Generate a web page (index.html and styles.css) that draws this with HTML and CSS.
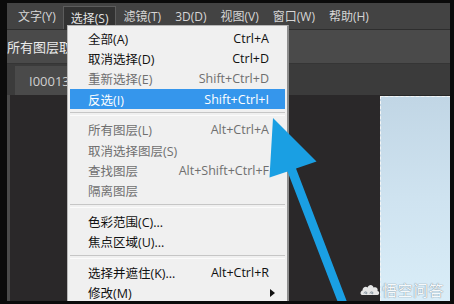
FILE: index.html
```html
<!DOCTYPE html>
<html>
<head>
<meta charset="utf-8">
<link rel="stylesheet" href="styles.css">
</head>
<body>
<div class="app">
  <div class="menubar">
    <span class="mi">文字(Y)</span>
    <span class="mi open">选择(S)</span>
    <span class="mi">滤镜(T)</span>
    <span class="mi">3D(D)</span>
    <span class="mi">视图(V)</span>
    <span class="mi">窗口(W)</span>
    <span class="mi">帮助(H)</span>
  </div>
  <div class="options"><span class="opt-text">所有图层取样</span></div>
  <div class="tabs"><div class="tab">I00013</div></div>
  <div class="workspace">
    <div class="leftstrip"></div>
    <div class="pasteboard"></div>
    <div class="image"></div>
  </div>

  <div class="menu">
    <div class="row"><span>全部(A)</span><span class="sc">Ctrl+A</span></div>
    <div class="row"><span>取消选择(D)</span><span class="sc">Ctrl+D</span></div>
    <div class="row dis"><span>重新选择(E)</span><span class="sc">Shift+Ctrl+D</span></div>
    <div class="row hl"><span>反选(I)</span><span class="sc">Shift+Ctrl+I</span></div>
    <div class="sep"></div>
    <div class="row dis"><span>所有图层(L)</span><span class="sc">Alt+Ctrl+A</span></div>
    <div class="row dis"><span>取消选择图层(S)</span><span class="sc"></span></div>
    <div class="row dis"><span>查找图层</span><span class="sc">Alt+Shift+Ctrl+F</span></div>
    <div class="row dis"><span>隔离图层</span><span class="sc"></span></div>
    <div class="sep"></div>
    <div class="row"><span>色彩范围(C)...</span><span class="sc"></span></div>
    <div class="row"><span>焦点区域(U)...</span><span class="sc"></span></div>
    <div class="sep"></div>
    <div class="row"><span>选择并遮住(K)...</span><span class="sc">Alt+Ctrl+R</span></div>
    <div class="row"><span>修改(M)</span><span class="sub"></span></div>
  </div>

  <svg class="arrow" viewBox="0 0 454 304" width="454" height="304">
    <polygon fill="#1a9fe3" points="273,118 316.5,161.5 296,168.4 349.6,308.7 341.6,311.9 287.5,171.6 269.5,177.5"/>
  </svg>

  <div class="watermark">
    <svg class="wk-logo" viewBox="0 0 20 14" width="20" height="14">
      <path d="M2 12 C0 12 0 8 2.5 7.5 C2.5 4 6 3 7.5 4.5 C8.5 1 13 1 13.5 4.5 C15.5 3.5 18.5 5 17.5 8 C20 8.5 19.5 12 17.5 12 Z" fill="#e6e6e6"/>
      <path d="M4 10.5 C4 8.5 7 8.5 7 10 C7 11 5.5 11 5.5 10" stroke="#7a8a96" stroke-width="1" fill="none"/>
      <path d="M10 10.5 C10 8.5 13 8.5 13 10 C13 11 11.5 11 11.5 10" stroke="#7a8a96" stroke-width="1" fill="none"/>
    </svg>
    <span class="wk-text">悟空问答</span>
  </div>
</div>
</body>
</html>
```

FILE: styles.css
```css
* { box-sizing: border-box; margin: 0; padding: 0; }
html, body { width: 454px; height: 304px; overflow: hidden; background: #0b0b0b; }
body { font-family: "Open Sans", "Noto Sans CJK SC", sans-serif; }

.app {
  position: relative;
  margin: 3px 4px 0 7px;
  height: 298px;
  display: flex;
  flex-direction: column;
  overflow: hidden;
  background: #282828;
}

.menubar {
  height: 27px;
  flex: none;
  display: flex;
  align-items: stretch;
  padding-left: 4px;
  background: #434343;
  border-bottom: 1px solid #2e2e2e;
}
.mi {
  display: flex;
  align-items: center;
  padding: 0 7px;
  font-size: 12px;
  color: #d6d6d6;
}
.mi.open {
  margin-top: 3px;
  background: #323232;
  border: 1px solid #5c5c5c;
  border-bottom: none;
  color: #e4e4e4;
}

.options {
  height: 34px;
  flex: none;
  display: flex;
  align-items: center;
  background: #4a4a4a;
  border-bottom: 1px solid #353535;
  overflow: hidden;
}
.opt-text {
  font-size: 13px;
  color: #ececec;
  white-space: nowrap;
}

.tabs {
  height: 31px;
  flex: none;
  display: flex;
  align-items: flex-end;
  padding-left: 8px;
  background: #3b3b3b;
}
.tab {
  height: 29px;
  width: 90px;
  display: flex;
  align-items: center;
  padding-left: 14px;
  font-size: 13px;
  color: #cfcfcf;
  background: #4a4a4a;
}

.workspace {
  flex: 1;
  display: flex;
  background: #282828;
}
.leftstrip { width: 3px; background: #4a4a4a; }
.pasteboard { flex: 1; background: #2a2829; }
.image {
  width: 70px;
  margin-top: 1px;
  background: linear-gradient(180deg, #c1d6e5 0%, #cfe3f0 50%, #d9edf8 100%);
  border-top: 1px dashed #f4f4f4;
  border-left: 1px dashed #f4f4f4;
}

.menu {
  position: absolute;
  left: 60px;
  top: 22px;
  width: 222px;
  height: 290px;
  padding: 2px 2px 0 2px;
  background: #f0f0f0;
  border: 1px solid #b8b8b8;
  border-right: 2px solid #8d8d8d;
  font-size: 12.5px;
  color: #111;
}
.row {
  height: 20.3px;
  display: flex;
  align-items: center;
  justify-content: space-between;
  padding: 0 16px 0 18px;
  white-space: nowrap;
}
.row.dis { color: #6f6f6f; }
.row.hl { background: #3596ec; color: #fff; }
.sc { font-size: 12.5px; }
.sep {
  height: 10.5px;
  display: flex;
  align-items: center;
}
.sep::before {
  content: "";
  display: block;
  width: 100%;
  height: 2px;
  border-top: 1px solid #c6c6c6;
  border-bottom: 1px solid #fbfbfb;
}
.sub {
  width: 0;
  height: 0;
  border-top: 4px solid transparent;
  border-bottom: 4px solid transparent;
  border-left: 5px solid #111;
  margin-right: -6px;
}

.arrow {
  position: absolute;
  left: -7px;
  top: -3px;
}

.watermark {
  position: absolute;
  left: 353px;
  top: 276px;
  display: flex;
  align-items: center;
  gap: 2px;
}
.wk-text {
  font-family: "Noto Sans CJK SC", sans-serif;
  font-size: 15px;
  color: #f6f9fb;
  letter-spacing: 0.5px;
  text-shadow: 0 0 1px #7f8f9c, 0 0 1px #7f8f9c;
}
```
